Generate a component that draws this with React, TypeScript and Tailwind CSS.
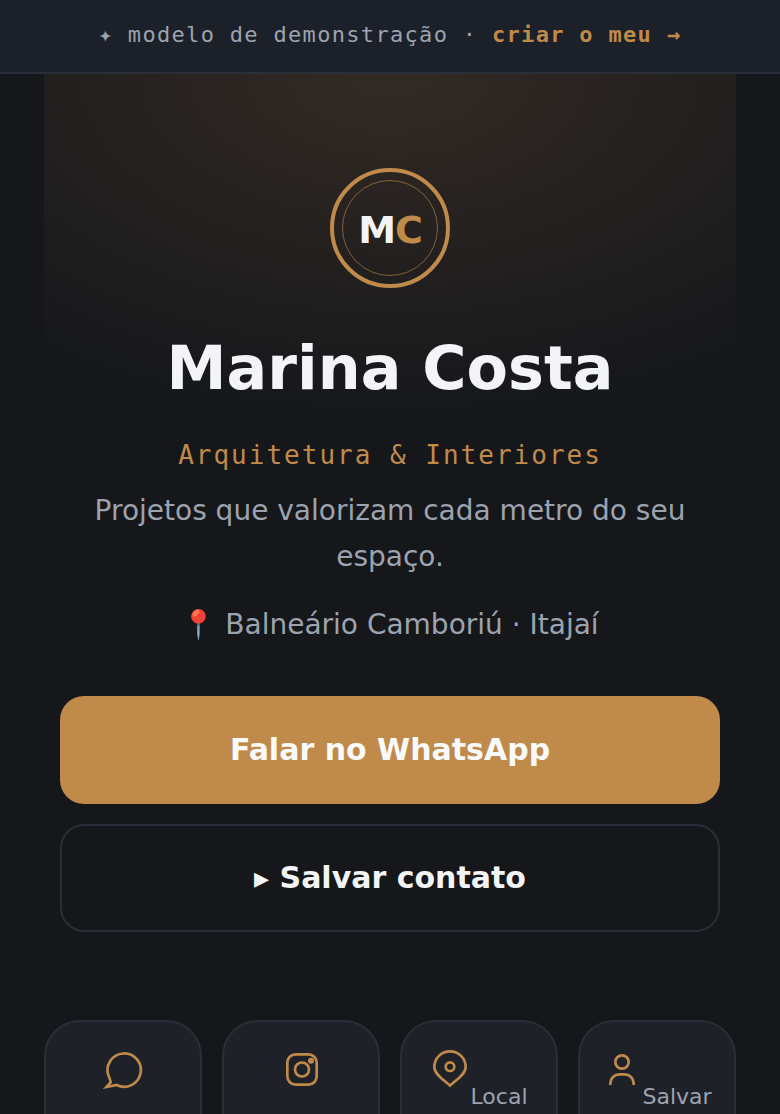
import React from 'react';

const sans = "font-['DejaVu_Sans',sans-serif]";
const iconClass = 'inline-block align-baseline mb-[15px]';

const ChatIcon = () => (
  <svg width="40" height="40" viewBox="0 0 24 24" fill="none" stroke="currentColor" strokeWidth="1.6" className={iconClass}>
    <path d="M8.2 21.6A10 10 0 1 0 3.2 15.8Q4.4 18.5 4.6 20L2 22.8Z" />
  </svg>
);

const InstagramIcon = () => (
  <svg width="40" height="40" viewBox="0 0 24 24" fill="none" stroke="currentColor" strokeWidth="1.6" className={iconClass}>
    <rect x="3.8" y="3.2" width="17.6" height="18.2" rx="5" />
    <circle cx="12.6" cy="12.3" r="4.2" />
    <circle cx="18" cy="7" r="1" fill="currentColor" />
  </svg>
);

const PinIcon = () => (
  <svg width="40" height="40" viewBox="0 0 24 24" fill="none" stroke="currentColor" strokeWidth="1.6" className={iconClass}>
    <path d="M12 22C9 19 2.6 15.5 2.6 10.8A9.4 9.4 0 0 1 21.4 10.8C21.4 15.5 15 19 12 22Z" />
    <circle cx="12" cy="10.6" r="2.6" />
  </svg>
);

const PersonIcon = () => (
  <svg width="40" height="40" viewBox="0 0 24 24" fill="none" stroke="currentColor" strokeWidth="1.6" className={iconClass}>
    <circle cx="12" cy="7.8" r="4" />
    <path d="M5 21.6v-1a5.4 5.4 0 0 1 5.4-5.4h3.2a5.4 5.4 0 0 1 5.4 5.4v1" />
  </svg>
);

const tiles = [
  { icon: <ChatIcon />, label: 'WhatsApp' },
  { icon: <InstagramIcon />, label: 'Instagram' },
  { icon: <PinIcon />, label: 'Local' },
  { icon: <PersonIcon />, label: 'Salvar' },
];

export default function App() {
  return (
    <div className={`h-screen overflow-hidden bg-[#15171b] ${sans}`}>
      <div className="h-[74px] pb-1 flex items-center justify-center bg-[#1c2029] border-b-2 border-[#2a2e38] font-['DejaVu_Sans_Mono',monospace] text-[22px] tracking-[1.32px] text-[#9ca3af]">
        <span>✦ modelo de demonstração · <b className="font-bold text-[#c08a4b]">criar o meu →</b></span>
      </div>

      <div className="mx-11 px-4 pt-[94px] flex flex-col items-center bg-[radial-gradient(ellipse_607px_350px_at_top,#332a24_0%,#15171b_100%)]">
        <div className="w-[120px] h-[120px] rounded-full border-4 border-[#c08a4b] flex items-center justify-center relative">
          <div className="absolute inset-2 rounded-full border border-[#c08a4b]/60" />
          <span className="pt-1 text-[38px] tracking-[-1px] font-bold text-[#f3f4f6]">M<span className="text-[#c08a4b]">C</span></span>
        </div>
        <h1 className="mt-[40px] text-[60.3px] leading-[80px] font-bold text-[#f3f4f6]">Marina Costa</h1>
        <p className="mt-[27px] font-['DejaVu_Sans_Mono',monospace] text-[26px] leading-[40px] tracking-[2px] text-[#c08a4b]">Arquitetura &amp; Interiores</p>
        <p className="mt-[13px] text-[28px] leading-[46px] text-[#9ca3af] text-center">Projetos que valorizam cada metro do seu espaço.</p>
        <p className="mt-[22px] text-[28px] leading-[46px] text-[#9ca3af]">📍 Balneário Camboriú · Itajaí</p>
      </div>

      <div className="mx-[60px] mt-[48px] flex flex-col gap-5">
        <div className="h-[108px] pb-0.5 rounded-[24px] bg-[#c08a4b] flex items-center justify-center text-[30px] font-bold text-[#f9fafb]">Falar no WhatsApp</div>
        <div className="h-[108px] pb-0.5 rounded-[24px] border-2 border-[#2a2e38] flex items-center justify-center text-[30px] font-bold text-[#f3f4f6]">▸ Salvar contato</div>
      </div>

      <div className="mx-11 mt-[88px] grid grid-cols-4 gap-5">
        {tiles.map((t) => (
          <div key={t.label} className="rounded-[36px] border-2 border-[#2a2e38] bg-[#1e2128] px-3 pt-[27px] pb-6 text-center text-[22px] text-[#9ca3af]">
            <span className="text-[#c08a4b]">{t.icon}</span>
            {t.label}
          </div>
        ))}
      </div>
    </div>
  );
}
